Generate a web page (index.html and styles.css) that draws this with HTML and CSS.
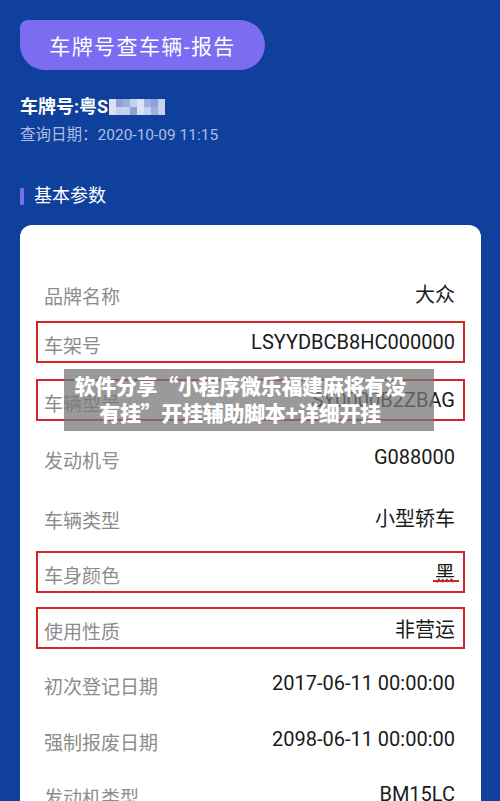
FILE: index.html
```html
<!DOCTYPE html>
<html lang="zh-CN">
<head>
  <meta charset="UTF-8" />
  <meta name="viewport" content="width=device-width, initial-scale=1.0" />
  <title>车牌号查车辆-报告</title>
  <link rel="stylesheet" href="styles.css">
</head>
<body>

<header class="topo">
  <div class="pilula">车牌号查车辆-报告</div>
  <div class="placa">车牌号:粤S<span class="mosaico"><i></i><i></i><i></i><i></i><i></i><i></i><i></i><i></i><i></i><i></i><i></i><i></i><i></i><i></i><i></i><i></i></span></div>
  <div class="data">查询日期：2020-10-09 11:15</div>
</header>

<h2 class="secao">基本参数</h2>

<section class="cartao">
  <div class="linha"><span class="rotulo">品牌名称</span><span class="valor">大众</span></div>
  <div class="linha marcada"><span class="rotulo">车架号</span><span class="valor">LSYYDBCB8HC000000</span></div>
  <div class="linha marcada"><span class="rotulo">车辆型号</span><span class="valor">SY0000B2ZBAG</span></div>
  <div class="linha"><span class="rotulo">发动机号</span><span class="valor">G088000</span></div>
  <div class="linha"><span class="rotulo">车辆类型</span><span class="valor">小型轿车</span></div>
  <div class="linha marcada"><span class="rotulo">车身颜色</span><span class="valor riscado">黑</span></div>
  <div class="linha marcada"><span class="rotulo">使用性质</span><span class="valor">非营运</span></div>
  <div class="linha"><span class="rotulo">初次登记日期</span><span class="valor">2017-06-11 00:00:00</span></div>
  <div class="linha"><span class="rotulo">强制报废日期</span><span class="valor">2098-06-11 00:00:00</span></div>
  <div class="linha"><span class="rotulo">发动机类型</span><span class="valor">BM15LC</span></div>
</section>

<div class="aviso">软件分享“小程序微乐福建麻将有没<br>有挂”开挂辅助脚本+详细开挂</div>

</body>
</html>
```

FILE: styles.css
```css
* {
  box-sizing: border-box;
}

html, body {
  margin: 0;
  padding: 0;
  width: 100%;
  height: 100%;
  overflow: hidden;
  font-family: Roboto, "Noto Sans CJK SC", sans-serif;
  background-color: #0f409b;
  color: #fff;
}

body {
  position: relative;
  padding: 20px 19px 0 20px;
}

.pilula {
  width: 245px;
  height: 50px;
  border-radius: 8px 25px 25px 25px;
  background: #7b6cf2;
  color: #fff;
  font-size: 21px;
  display: flex;
  align-items: center;
  justify-content: center;
  letter-spacing: 1.4px;
}

.placa {
  margin-top: 24px;
  font-size: 18px;
  font-weight: bold;
  line-height: 26px;
  display: flex;
  align-items: center;
}

.mosaico {
  display: inline-grid;
  grid-template-columns: repeat(8, 7px);
  grid-template-rows: repeat(2, 8px);
  margin-left: 1px;
}

.mosaico i {
  background: #c6d0ef;
}

.mosaico i:nth-child(3n) {
  background: #9eb0e2;
}

.mosaico i:nth-child(4n+1) {
  background: #dbe2f6;
}

.mosaico i:nth-child(5n+2) {
  background: #8ea2da;
}

.data {
  margin-top: 4px;
  font-size: 15.5px;
  color: #aebde6;
  line-height: 22px;
}

.secao {
  margin: 38px 0 0;
  font-size: 18px;
  font-weight: normal;
  line-height: 24px;
  display: flex;
  align-items: center;
  gap: 10px;
}

.secao::before {
  content: "";
  width: 4px;
  height: 17px;
  background: #7b6cf2;
  border-radius: 1px;
}

.cartao {
  margin-top: 17px;
  background: #fff;
  border-radius: 12px 12px 0 0;
  padding: 40px 16px 40px;
}

.linha {
  height: 56px;
  display: flex;
  align-items: center;
  justify-content: space-between;
  padding: 0 8px 0 6px;
  border: 2px solid transparent;
}

.marcada {
  border-color: #d3262b;
  height: 42px;
}

.linha:nth-child(2) { margin: 0 0 16px; }
.linha:nth-child(3) { margin: 0 0 8px; }
.linha:nth-child(5) { margin: 4px 0 6px; }
.linha:nth-child(6) { margin: 0 0 14px; }
.linha:nth-child(7) { margin: 0 0 6px; }
.linha:nth-child(10) { margin-top: -1px; }

.rotulo {
  font-size: 19px;
  color: #8c8c8c;
  position: relative;
  top: 2px;
}

.valor {
  font-size: 20px;
  color: #1a1a1a;
  position: relative;
}

.riscado::after {
  content: "";
  position: absolute;
  left: -2px;
  right: -4px;
  bottom: 5px;
  height: 2px;
  background: #d3262b;
}

.aviso {
  position: absolute;
  left: 64px;
  top: 369px;
  width: 370px;
  height: 62px;
  padding: 3px 18px 0 0;
  background: rgba(120, 120, 120, 0.75);
  color: #fff;
  font-family: "Noto Sans CJK SC", sans-serif;
  font-size: 21px;
  font-weight: 900;
  line-height: 27px;
  letter-spacing: -0.3px;
  text-align: center;
}
```
